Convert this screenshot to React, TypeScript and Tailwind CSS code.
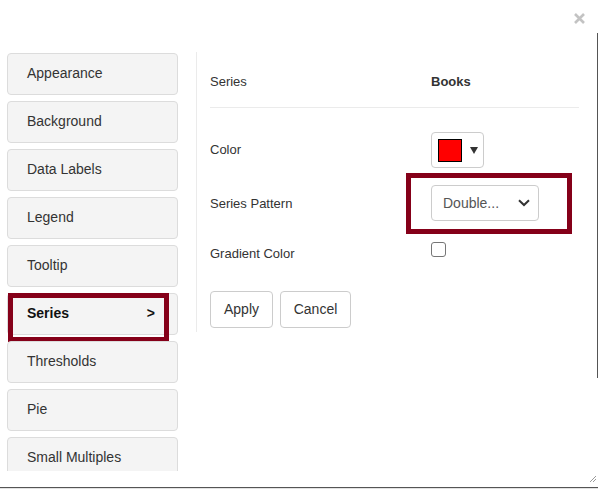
const tabs = [
  "Appearance",
  "Background",
  "Data Labels",
  "Legend",
  "Tooltip",
  "Series",
  "Thresholds",
  "Pie",
  "Small Multiples",
];

function TabButton({ label }: { label: string }) {
  const active = label === "Series";
  return (
    <div className="relative shrink-0 h-[42px] w-full flex items-center pb-[2px] pl-[19px] pr-[22px] bg-[#f4f4f4] border border-[#dcdcdc] rounded-[4px] text-[14px] text-[#333]">
      {active ? (
        <>
          <span className="font-bold text-[#111]">{label}</span>
          <span className="ml-auto font-bold text-[#111]">&gt;</span>
          <div className="absolute left-0 -top-[1px] w-[161px] h-[49px] border-[5px] border-[#850019]" />
        </>
      ) : (
        <span>{label}</span>
      )}
    </div>
  );
}

export default function App() {
  return (
    <div className="relative w-[598px] h-[489px] bg-white overflow-hidden flex flex-col font-['Liberation_Sans',Arial,sans-serif] text-[#333]">
      {/* header with close */}
      <div className="h-[52px] shrink-0 flex justify-end pt-[13px] pr-[13px]">
        <svg width="11" height="11" viewBox="0 0 11 11">
          <path d="M1 1 L10 10 M10 1 L1 10" stroke="#c3c3c3" strokeWidth="2.6" />
        </svg>
      </div>

      <div className="h-[419px] shrink-0 flex pl-[7px]">
        {/* sidebar */}
        <div className="mt-[1px] w-[171px] h-[418px] flex flex-col gap-[6px] overflow-hidden">
          {tabs.map((t) => (
            <TabButton key={t} label={t} />
          ))}
        </div>

        {/* settings panel */}
        <div className="ml-[18px] h-[280px] w-[383px] border-l border-[#ebebeb] pl-[13px] flex flex-col text-[13px]">
          <div className="h-[56px] shrink-0 flex items-center pt-[4px] border-b border-[#ebebeb] w-[369px]">
            <span className="w-[221px]">Series</span>
            <span className="font-bold text-[#333]">Books</span>
          </div>

          <div className="mt-[24px] h-[36px] flex items-center">
            <span className="w-[221px]">Color</span>
            <div className="w-[53px] h-[36px] border border-[#ccc] rounded-[4px] flex items-center pl-[6px]">
              <div className="w-[24px] h-[23px] bg-[#ff0000] border border-black" />
              <div className="ml-[8px] w-0 h-0 border-l-[4px] border-r-[4px] border-t-[7px] border-l-transparent border-r-transparent border-t-[#333]" />
            </div>
          </div>

          <div className="relative mt-[17px] h-[36px] flex items-center">
            <span className="w-[221px] pt-[2px]">Series Pattern</span>
            <div className="relative w-[108px] h-[36px] border border-[#ccc] rounded-[4px] flex items-center pl-[11px] text-[14px] text-[#555]">
              <span>Double...</span>
              <svg className="ml-auto mr-[8px]" width="12" height="8" viewBox="0 0 12 8">
                <path d="M1 1.2 L6 6 L11 1.2" fill="none" stroke="#333" strokeWidth="2" />
              </svg>
              <div className="absolute -left-[26px] -top-[13px] w-[166px] h-[61px] border-[5px] border-[#850019]" />
            </div>
          </div>

          <div className="mt-[20px] h-[22px] flex items-center">
            <span className="w-[221px] pt-[4px]">Gradient Color</span>
            <div className="-mt-[5px] w-[15px] h-[15px] border-[1.5px] border-[#767676] rounded-[3px] bg-white" />
          </div>

          <div className="mt-[28px] flex gap-[7px] text-[14px]">
            <button className="h-[37px] w-[63px] border border-[#ccc] rounded-[4px] bg-white text-[#333]">
              Apply
            </button>
            <button className="h-[37px] w-[71px] border border-[#ccc] rounded-[4px] bg-white text-[#333]">
              Cancel
            </button>
          </div>
        </div>
      </div>

      <div className="h-[16px] shrink-0 flex justify-end items-start pr-[2px] pt-[5px]">
        <svg width="6" height="6" viewBox="0 0 6 6">
          <path d="M6 0 L0 6 M6 3 L3 6" stroke="#9a9a9a" strokeWidth="1" />
        </svg>
      </div>
      <div className="h-[1px] shrink-0 bg-[#555]" />
      <div className="h-[1px] shrink-0 bg-[#e2e2e2]" />

      {/* page scrollbar edge */}
      <div className="absolute left-[597px] top-[33px] w-[1px] h-[345px] bg-[#555]" />
    </div>
  );
}
